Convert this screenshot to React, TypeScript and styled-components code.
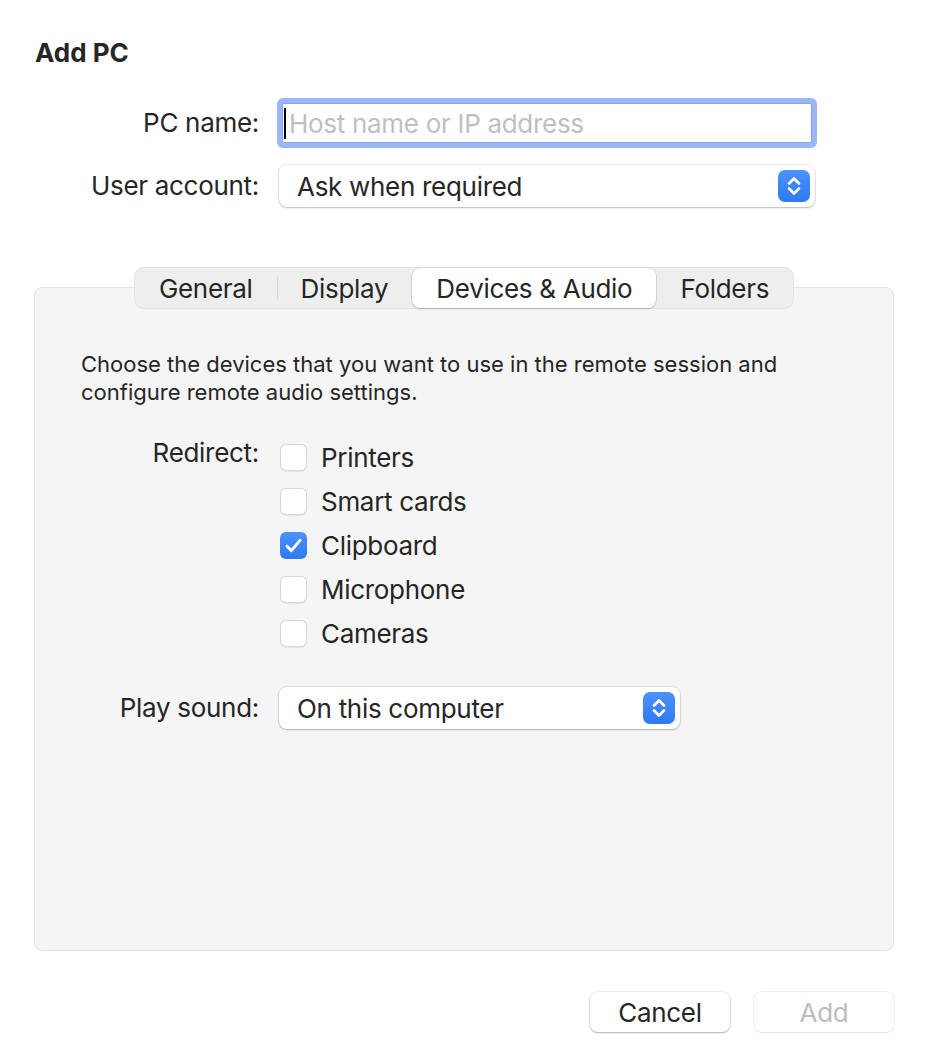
import styled, { createGlobalStyle } from "styled-components";

const tabs = ["General", "Display", "Devices & Audio", "Folders"];
const activeTab = "Devices & Audio";

const devices = [
  { id: "printers", label: "Printers", checked: false },
  { id: "smartcards", label: "Smart cards", checked: false },
  { id: "clipboard", label: "Clipboard", checked: true },
  { id: "microphone", label: "Microphone", checked: false },
  { id: "cameras", label: "Cameras", checked: false },
];

function Stepper() {
  return (
    <StStepper>
      <svg width="32" height="32" viewBox="0 0 32 32" fill="none">
        <path
          d="M11 13.5L16 8.5L21 13.5M11 18.5L16 23.5L21 18.5"
          stroke="#fff"
          strokeWidth="2.6"
          strokeLinecap="round"
          strokeLinejoin="round"
        />
      </svg>
    </StStepper>
  );
}

function Checkbox({ checked }: { checked: boolean }) {
  return (
    <StCheckbox $checked={checked}>
      {checked && (
        <svg width="27" height="27" viewBox="0 0 27 27" fill="none">
          <path
            d="M7 14.2L11.4 18.6L20 8.4"
            stroke="#fff"
            strokeWidth="3"
            strokeLinecap="round"
            strokeLinejoin="round"
          />
        </svg>
      )}
    </StCheckbox>
  );
}

export default function App() {
  return (
    <>
      <GlobalStyle />
      <StWindow>
        <StTitle>Add PC</StTitle>

        <StForm $labelWidth={225}>
          <StLabel>PC name:</StLabel>
          <StField>
            <StCaret />
            <StInput placeholder="Host name or IP address" />
          </StField>

          <StLabel>User account:</StLabel>
          <StSelect $width={536}>
            <span>Ask when required</span>
            <Stepper />
          </StSelect>
        </StForm>

        <StTabStrip>
          <StTabs>
            {tabs.map((tab, i) => {
              const prev = tabs[i - 1];
              const divider = i > 0 && prev !== activeTab && tab !== activeTab;
              return (
                <StTab key={tab} $active={tab === activeTab} $divider={divider}>
                  {tab}
                </StTab>
              );
            })}
          </StTabs>
        </StTabStrip>

        <StPanel>
          <StDescription>
            Choose the devices that you want to use in the remote session and
            <br />
            configure remote audio settings.
          </StDescription>

          <StPanelForm $labelWidth={224}>
            <StTopLabel>Redirect:</StTopLabel>
            <StCheckList>
              {devices.map((d) => (
                <StCheckRow key={d.id}>
                  <Checkbox checked={d.checked} />
                  <span>{d.label}</span>
                </StCheckRow>
              ))}
            </StCheckList>

            <StLabel>Play sound:</StLabel>
            <StSelect $width={401}>
              <span>On this computer</span>
              <Stepper />
            </StSelect>
          </StPanelForm>
        </StPanel>

        <StFooter>
          <StButton>Cancel</StButton>
          <StButton disabled>Add</StButton>
        </StFooter>
      </StWindow>
    </>
  );
}

const GlobalStyle = createGlobalStyle`
  * {
    box-sizing: border-box;
  }

  html,
  body {
    margin: 0;
    padding: 0;
    background: #ffffff;
  }

  body {
    font-family: Inter, "Noto Sans", "Liberation Sans", sans-serif;
    color: #262626;
  }
`;

const StWindow = styled.main`
  display: flex;
  flex-direction: column;
  width: 928px;
  height: 1058px;
  padding: 37px 34px 0 34px;
  font-size: 26px;
  letter-spacing: -0.3px;
`;

const StTitle = styled.h1`
  margin: 0;
  padding-left: 1px;
  font-size: 26px;
  line-height: 32px;
  font-weight: 700;
  letter-spacing: 0;
`;

const StForm = styled.div<{ $labelWidth: number }>`
  display: grid;
  grid-template-columns: ${(p) => p.$labelWidth}px 1fr;
  column-gap: 20px;
  row-gap: 22px;
  align-items: center;
  margin-top: 34px;
`;

const StLabel = styled.label`
  text-align: right;
  font-size: 26px;
  line-height: 32px;
`;

const StTopLabel = styled(StLabel)`
  align-self: start;
  margin-top: 2px;
`;

const StField = styled.div`
  display: flex;
  align-items: center;
  width: 530px;
  height: 40px;
  margin-left: 3px;
  padding-left: 1px;
  background: #ffffff;
  border: 1px solid #86a5ee;
  border-radius: 2px;
  box-shadow: 0 0 0 5px #9bb7f6;
`;

const StCaret = styled.span`
  flex: none;
  width: 2px;
  height: 31px;
  background: #000000;
`;

const StInput = styled.input`
  flex: 1;
  min-width: 0;
  height: 100%;
  padding: 0 0 0 3px;
  border: none;
  outline: none;
  background: transparent;
  font-family: inherit;
  font-size: 26px;
  letter-spacing: -0.3px;
  color: #262626;

  &::placeholder {
    color: #bfbfbf;
  }
`;

const StSelect = styled.div<{ $width: number }>`
  display: flex;
  align-items: center;
  justify-content: space-between;
  width: ${(p) => p.$width}px;
  height: 42px;
  padding: 0 5px 0 18px;
  background: #ffffff;
  border-radius: 8px;
  box-shadow: 0 0 0 1px rgba(0, 0, 0, 0.07), 0 1px 2px rgba(0, 0, 0, 0.22);
  font-size: 26px;
`;

const StStepper = styled.span`
  display: flex;
  width: 32px;
  height: 32px;
  border-radius: 7px;
  background: linear-gradient(#4d92fa, #2e79f5);
`;

const StTabStrip = styled.div`
  position: relative;
  z-index: 1;
  display: flex;
  justify-content: center;
  margin-top: 60px;
`;

const StTabs = styled.div`
  display: flex;
  height: 42px;
  padding: 1px;
  background: #eeeeee;
  border-radius: 10px;
  box-shadow: inset 0 0 0 1px #e4e4e4;
`;

const StTab = styled.div<{ $active: boolean; $divider: boolean }>`
  position: relative;
  display: flex;
  align-items: center;
  padding: 0 24px;
  border-radius: 8px;
  font-size: 26px;
  background: ${(p) => (p.$active ? "#ffffff" : "transparent")};
  box-shadow: ${(p) =>
    p.$active ? "0 0 0 0.5px rgba(0,0,0,0.12), 0 1px 2px rgba(0,0,0,0.2)" : "none"};

  &::before {
    content: "";
    display: ${(p) => (p.$divider ? "block" : "none")};
    position: absolute;
    left: 0;
    top: 9px;
    bottom: 9px;
    width: 1px;
    background: #d6d6d6;
  }
`;

const StPanel = styled.section`
  height: 664px;
  margin-top: -22px;
  padding-top: 62px;
  background: #f5f5f5;
  border: 1px solid #e3e3e3;
  border-radius: 8px;
`;

const StDescription = styled.p`
  margin: 0 46px;
  font-size: 22px;
  line-height: 28px;
  letter-spacing: 0;
`;

const StPanelForm = styled(StForm)`
  row-gap: 32px;
  margin-top: 29px;
`;

const StCheckList = styled.div`
  display: flex;
  flex-direction: column;
`;

const StCheckRow = styled.label`
  display: flex;
  align-items: center;
  gap: 14px;
  height: 44px;
  padding-left: 1px;
  font-size: 26px;
`;

const StCheckbox = styled.span<{ $checked: boolean }>`
  display: flex;
  flex: none;
  width: 27px;
  height: 27px;
  border-radius: 6px;
  background: ${(p) => (p.$checked ? "linear-gradient(#4d92fa, #2e79f5)" : "#ffffff")};
  box-shadow: ${(p) =>
    p.$checked
      ? "none"
      : "inset 0 0 0 1px rgba(0,0,0,0.16), 0 0.5px 1px rgba(0,0,0,0.06)"};
`;

const StFooter = styled.footer`
  display: flex;
  justify-content: flex-end;
  gap: 24px;
  margin-top: 41px;
`;

const StButton = styled.button`
  width: 140px;
  height: 40px;
  padding: 0;
  border: none;
  border-radius: 8px;
  background: #ffffff;
  font-family: inherit;
  font-size: 26px;
  letter-spacing: -0.3px;
  color: #262626;
  box-shadow: 0 0 0 1px rgba(0, 0, 0, 0.07), 0 1px 2px rgba(0, 0, 0, 0.25);

  &:disabled {
    color: #bdbdbd;
    box-shadow: 0 0 0 1px rgba(0, 0, 0, 0.06), 0 1px 1px rgba(0, 0, 0, 0.06);
  }
`;
